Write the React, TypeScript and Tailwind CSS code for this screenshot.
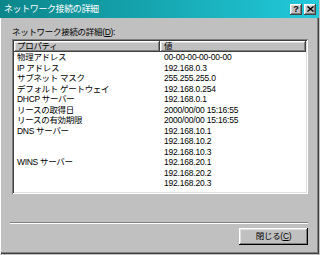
import React from 'react';

const rows: [string, string][] = [
  ['物理アドレス', '00-00-00-00-00-00'],
  ['IP アドレス', '192.168.0.3'],
  ['サブネット マスク', '255.255.255.0'],
  ['デフォルト ゲートウェイ', '192.168.0.254'],
  ['DHCP サーバー', '192.168.0.1'],
  ['リースの取得日', '2000/00/00 15:16:55'],
  ['リースの有効期限', '2000/00/00 15:16:55'],
  ['DNS サーバー', '192.168.10.1'],
  ['', '192.168.10.2'],
  ['', '192.168.10.3'],
  ['WINS サーバー', '192.168.20.1'],
  ['', '192.168.20.2'],
  ['', '192.168.20.3'],
];

// raised win2k bevel
const raised =
  'shadow-[inset_-1px_-1px_0_#404040,inset_1px_1px_0_#ffffff,inset_-2px_-2px_0_#808080,inset_2px_2px_0_#dfdfdf]';

export default function App() {
  return (
    <div className="w-[320px] h-[255px] bg-[#c0c0c0] overflow-hidden font-['Liberation_Sans','Noto_Sans_CJK_JP',sans-serif] text-[8.5px] text-black">
      <div className="w-[319px] h-[254px] flex flex-col shadow-[inset_1px_0_0_#ffffff,inset_-1px_-1px_0_#404040,inset_-2px_-2px_0_#808080]">
        {/* Title bar */}
        <div className="h-[18px] flex items-center bg-gradient-to-r from-[#0b868a] to-[#22cadc] pl-[4px] pr-[3px]">
          <span className="text-white text-[9px] leading-none tracking-[-0.4px]">ネットワーク接続の詳細</span>
          <div className="ml-auto flex gap-[2px]">
            <div className={`w-[12px] h-[11px] bg-[#c0c0c0] flex items-center justify-center text-[9px] font-bold leading-none ${raised}`}>?</div>
            <div className={`w-[12px] h-[11px] bg-[#c0c0c0] flex items-center justify-center ${raised}`}>
              <svg width="7" height="6" viewBox="0 0 7 6">
                <path d="M0.5 0.5 L6.5 5.5 M6.5 0.5 L0.5 5.5" stroke="#000" strokeWidth="1.4" />
              </svg>
            </div>
          </div>
        </div>

        {/* Body */}
        <div className="flex-1 flex flex-col pl-[12px] pr-[11px] pt-[9px]">
          <div className="h-[10px] leading-[10px] tracking-[-0.3px]">
            ネットワーク接続の詳細(<span className="underline">D</span>):
          </div>

          {/* List view */}
          <div className="mt-[2px] h-[155px] bg-white p-[2px] shadow-[inset_1px_1px_0_#808080,inset_-1px_-1px_0_#ffffff,inset_2px_2px_0_#404040,inset_-2px_-2px_0_#dfdfdf]">
            <div className="flex h-[11px] leading-[11px]">
              <div className={`w-[146px] bg-[#c0c0c0] pl-[3px] tracking-[-0.3px] ${raised}`}>プロパティ</div>
              <div className={`flex-1 bg-[#c0c0c0] pl-[4px] ${raised}`}>値</div>
            </div>
            {rows.map(([k, v], i) => (
              <div key={i} className="flex h-[10.5px] leading-[10.5px] whitespace-nowrap">
                <div className="w-[146px] pl-[3px] tracking-[-0.3px]">{k}</div>
                <div className="pl-[4px] tracking-[-0.2px]">{v}</div>
              </div>
            ))}
          </div>

          {/* separator */}
          <div className="mt-[28px] -ml-[2px] h-[2px] border-t border-[#808080] border-b border-b-white" />

          <div className="mt-[4px] flex justify-end">
            <div className={`w-[69px] h-[17px] bg-[#c0c0c0] flex items-center justify-center tracking-[-0.3px] shadow-[inset_-1px_-1px_0_#000000,inset_1px_1px_0_#ffffff,inset_-2px_-2px_0_#808080,inset_2px_2px_0_#dfdfdf]`}>
              閉じる(<span className="underline">C</span>)
            </div>
          </div>
        </div>
      </div>
    </div>
  );
}
